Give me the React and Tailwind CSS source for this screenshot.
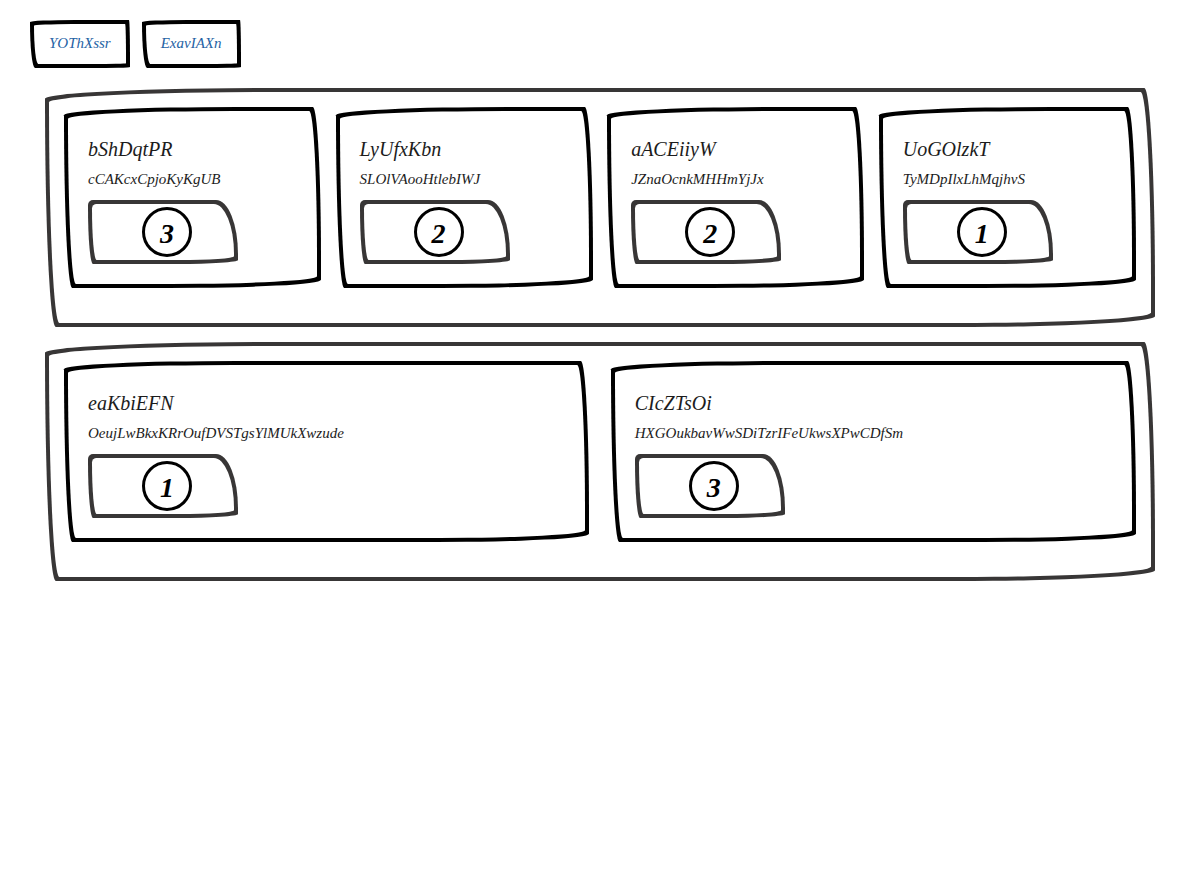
const rows = [
  {
    width: "w-[24%]",
    cards: [
      { title: "bShDqtPR", text: "cCAKcxCpjoKyKgUB", count: 3 },
      { title: "LyUfxKbn", text: "SLOlVAooHtlebIWJ", count: 2 },
      { title: "aACEiiyW", text: "JZnaOcnkMHHmYjJx", count: 2 },
      { title: "UoGOlzkT", text: "TyMDpIlxLhMqjhvS", count: 1 },
    ],
  },
  {
    width: "w-[49%]",
    cards: [
      { title: "eaKbiEFN", text: "OeujLwBkxKRrOufDVSTgsYlMUkXwzude", count: 1 },
      { title: "CIcZTsOi", text: "HXGOukbavWwSDiTzrIFeUkwsXPwCDfSm", count: 3 },
    ],
  },
];

const shapes = {
  panel: "rounded-[255px_12px_225px_12px/12px_225px_12px_255px]",
  button: "rounded-[45px_1px_40px_5px/2px_40px_1px_45px]",
  badge: "rounded-[5px_22px_60px_5px/5px_54px_4px_56px]",
};

function Sketch({ as: Tag = "div", shape, ink, className = "", inner = "", children, ...rest }) {
  return (
    <Tag className={`${shapes[shape]} ${ink} block p-1 ${className}`} {...rest}>
      <div className={`${shapes[shape]} bg-white ${inner}`}>{children}</div>
    </Tag>
  );
}

function Card({ title, text, count, width }) {
  return (
    <Sketch as="article" shape="panel" ink="bg-black" className={width} inner="p-5 text-[#1c1c1c]">
      <h2 className="mt-[3px] text-[20px] leading-[30px]">{title}</h2>
      <p className="text-[15px] leading-[30px]">{text}</p>
      <Sketch
        shape="badge"
        ink="bg-[#383636]"
        className="mt-[6px] w-[150px]"
        inner="flex h-14 items-center pl-[50px]"
      >
        <span className="flex size-[50px] items-center justify-center rounded-full border-3 border-black pt-1 text-[28px] leading-[40px] font-bold text-black">
          {count}
        </span>
      </Sketch>
    </Sketch>
  );
}

export default function App() {
  return (
    <main className="px-[30px] py-5 font-['Z003','URW_Chancery_L','Liberation_Serif',cursive] italic">
      <nav className="flex gap-3">
        {["YOThXssr", "ExavIAXn"].map((label) => (
          <Sketch
            key={label}
            as="a"
            href="#"
            shape="button"
            ink="bg-black"
            inner="h-10 px-[15px] text-[15px] leading-[38px] text-[#2562a4]"
          >
            {label}
          </Sketch>
        ))}
      </nav>
      <div className="mx-[15px] mt-5 flex flex-col gap-[15px]">
        {rows.map((row) => (
          <Sketch
            key={row.width}
            as="section"
            shape="panel"
            ink="bg-[#383636]"
            inner="flex justify-between px-[15px] pt-[15px] pb-[35px]"
          >
            {row.cards.map((card) => (
              <Card key={card.title} width={row.width} {...card} />
            ))}
          </Sketch>
        ))}
      </div>
    </main>
  );
}
